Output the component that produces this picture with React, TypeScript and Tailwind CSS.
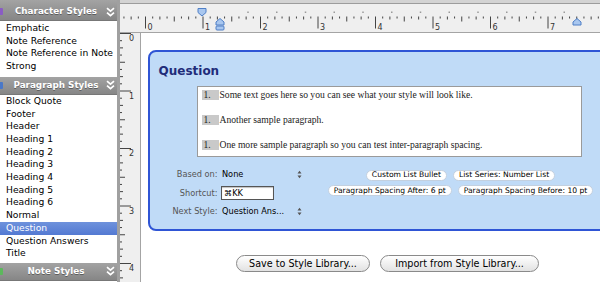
import React from "react";

const charStyles = ["Emphatic", "Note Reference", "Note Reference in Note", "Strong"];
const paraStyles = [
  "Block Quote",
  "Footer",
  "Header",
  "Heading 1",
  "Heading 2",
  "Heading 3",
  "Heading 4",
  "Heading 5",
  "Heading 6",
  "Normal",
  "Question",
  "Question Answers",
  "Title",
];

function Chevrons() {
  return (
    <svg width="9" height="10" viewBox="0 0 9 10">
      <path d="M1 1.2 L4.5 4.2 L8 1.2 M1 5.6 L4.5 8.6 L8 5.6" stroke="white" strokeWidth="1.7" fill="none" />
    </svg>
  );
}

function Header({ label, icon, tall }: { label: string; icon: string; tall?: boolean }) {
  return (
    <div
      className={
        "flex items-center bg-linear-to-b from-[#a3a3a3] to-[#868686] border-b border-[#777] " +
        (tall ? "h-[21px] pt-[3px]" : "h-[18px]")
      }
    >
      <div className={"w-[3px] h-[7px] rounded-r-[1px] " + icon} />
      <div className="flex-1 text-center pl-[6px] text-white font-bold text-[8.8px] leading-none [text-shadow:0_1px_0_rgba(0,0,0,0.35)]">
        {label}
      </div>
      <div className="w-[14px] flex items-center justify-center">
        <Chevrons />
      </div>
    </div>
  );
}

function UpDown() {
  return (
    <svg width="5" height="9" viewBox="0 0 5 9">
      <path d="M0.5 3.5 L2.5 0.8 L4.5 3.5 Z M0.5 5.5 L2.5 8.2 L4.5 5.5 Z" fill="#555" />
    </svg>
  );
}

function TopRuler() {
  const ticks: React.ReactNode[] = [];
  for (let i = -3; i <= 64; i++) {
    const x = 25.5 + 7.1875 * i;
    let len = 2;
    if (i % 8 === 0) len = 12;
    else if (i % 4 === 0) len = 5;
    else if (i % 2 === 0) len = 3;
    ticks.push(<line key={"t" + i} x1={x} x2={x} y1={16.5} y2={16.5 + len} stroke="#444" strokeWidth="1" />);
  }
  const nums: React.ReactNode[] = [];
  for (let n = 0; n <= 7; n++) {
    nums.push(
      <text key={"n" + n} x={25.5 + 57.5 * n + 2} y={30} fontSize="8" fill="#333" fontFamily="DejaVu Sans, sans-serif">
        {n}
      </text>
    );
  }
  const dots: React.ReactNode[] = [];
  for (let k = 0; k < 12; k++) {
    dots.push(<rect key={"d" + k} x={128 + 28.75 * k - 0.75} y={11.5} width="1.5" height="1.5" fill="#9a9a9a" />);
  }
  return (
    <svg width="480" height="33" className="block shrink-0">
      <rect x="0" y="0" width="480" height="4" fill="#d3d3d3" />
      <line x1="0" x2="480" y1="3.5" y2="3.5" stroke="#9c9c9c" />
      <rect x="0" y="4" width="480" height="28.5" fill="#efefef" />
      <line x1="0" x2="480" y1="32.5" y2="32.5" stroke="#a4a4a4" />
      {dots}
      {ticks}
      {nums}
      <path d="M78 8.5 L86 8.5 L86 12.5 L82 16 L78 12.5 Z" fill="#a9c7ef" stroke="#4f7fc6" strokeWidth="1" />
      <path d="M96 22 L100 18.5 L104 22 L104 25 L96 25 Z" fill="#a9c7ef" stroke="#4f7fc6" strokeWidth="1" />
      <rect x="96" y="26" width="8" height="4" rx="1" fill="#a9c7ef" stroke="#4f7fc6" strokeWidth="1" />
      <path d="M453 22 L457 18.5 L461 22 L461 25 L453 25 Z" fill="#a9c7ef" stroke="#4f7fc6" strokeWidth="1" />
    </svg>
  );
}

function VRuler() {
  const ticks: React.ReactNode[] = [];
  for (let i = 0; i <= 36; i++) {
    const y = 0.5 + 7.1875 * i;
    let len = 2;
    if (i % 8 === 0) len = 11;
    else if (i % 4 === 0) len = 5;
    else if (i % 2 === 0) len = 3;
    ticks.push(<line key={"v" + i} x1={0} x2={len} y1={y} y2={y} stroke="#444" strokeWidth="1" />);
  }
  const nums: React.ReactNode[] = [];
  for (let n = 0; n <= 4; n++) {
    nums.push(
      <text key={"vn" + n} x={9} y={57.5 * n + 8} fontSize="8" fill="#333" fontFamily="DejaVu Sans, sans-serif">
        {n}
      </text>
    );
  }
  return (
    <div className="w-[21px] shrink-0 bg-[#efefef] border-r border-[#a4a4a4]">
      <svg width="20" height="250" className="block">
        {ticks}
        {nums}
      </svg>
    </div>
  );
}

function Pill({ children }: { children: React.ReactNode }) {
  return (
    <div className="h-[11px] px-[5px] rounded-full bg-white border border-[#c3d0df] flex items-center text-[7.6px] leading-none text-black whitespace-nowrap">
      {children}
    </div>
  );
}

function PreviewRow({ text }: { text: string }) {
  return (
    <div className="h-[12px] flex items-center">
      <div className="ml-[4px] w-[17px] h-[10px] bg-[#c9c9c9] pl-[2px] flex items-center">1.</div>
      <div className="ml-[1px]">{text}</div>
    </div>
  );
}

export default function App() {
  return (
    <div className="w-[600px] h-[282px] overflow-hidden flex bg-white font-['DejaVu_Sans',sans-serif]">
      {/* Sidebar */}
      <div className="w-[117px] shrink-0 flex flex-col bg-white text-[9.2px] leading-[12.7px] text-black">
        <Header label="Character Styles" icon="bg-[#8a5cc4]" tall />
        <div className="pt-[1px] pb-[4px]">
          {charStyles.map((s) => (
            <div key={s} className="pl-[6px] whitespace-nowrap">
              {s}
            </div>
          ))}
        </div>
        <Header label="Paragraph Styles" icon="bg-[#4a78c8]" />
        <div className="pb-[3px]">
          {paraStyles.map((s) => (
            <div
              key={s}
              className={
                "pl-[6px] whitespace-nowrap " +
                (s === "Question" ? "bg-linear-to-b from-[#6e92dc] to-[#5379d2] text-white" : "")
              }
            >
              {s}
            </div>
          ))}
        </div>
        <Header label="Note Styles" icon="bg-[#5cb85c]" />
      </div>

      {/* Splitter */}
      <div className="w-[3px] shrink-0 bg-[#a0a0a0]" />

      {/* Document area */}
      <div className="flex-1 flex flex-col min-w-0">
        <TopRuler />
        <div className="flex flex-1 min-h-0">
          <VRuler />
          <div className="flex-1 min-w-0 overflow-hidden pl-[7px] pt-[17px]">
            <div className="w-[480px] rounded-[8px] border-[2.5px] border-[#2f55d5] bg-[#c0dbf7] pl-[8.5px] pt-[11px] pb-[8.5px]">
              <div className="text-[12px] font-bold leading-[16px] text-[#1f2c7a]">Question</div>
              <div className="ml-[38px] mt-[6.5px] w-[385px] border border-[#9a9a9a] bg-white pt-[2px] pb-[5px] flex flex-col gap-[13.3px] font-['Liberation_Serif',serif] text-[9.6px] leading-none text-[#222]">
                <PreviewRow text="Some text goes here so you can see what your style will look like." />
                <PreviewRow text="Another sample paragraph." />
                <PreviewRow text="One more sample paragraph so you can test inter-paragraph spacing." />
              </div>
              <div className="flex mt-[8.3px]">
                <div className="flex flex-col text-[8.2px] leading-none">
                  <div className="h-[18.3px] flex items-center">
                    <div className="w-[59px] text-right text-[#555]">Based on:</div>
                    <div className="ml-[4.5px] w-[75px] text-black">None</div>
                    <UpDown />
                  </div>
                  <div className="h-[18.3px] flex items-center">
                    <div className="w-[59px] text-right text-[#555]">Shortcut:</div>
                    <div className="ml-[3.5px] w-[53px] h-[14px] bg-white border border-[#555] shadow-[inset_0_1px_1px_rgba(0,0,0,0.25)] pl-[2px] flex items-center text-black">
                      ⌘KK
                    </div>
                  </div>
                  <div className="h-[18.3px] flex items-center">
                    <div className="w-[59px] text-right text-[#555]">Next Style:</div>
                    <div className="ml-[4.5px] w-[75px] text-black whitespace-nowrap">Question Ans...</div>
                    <UpDown />
                  </div>
                </div>
                <div className="w-[317px] pt-[4.3px] flex flex-col gap-[4.6px]">
                  <div className="flex justify-center gap-[6px]">
                    <Pill>Custom List Bullet</Pill>
                    <Pill>List Series: Number List</Pill>
                  </div>
                  <div className="flex justify-center gap-[6px]">
                    <Pill>Paragraph Spacing After: 6 pt</Pill>
                    <Pill>Paragraph Spacing Before: 10 pt</Pill>
                  </div>
                </div>
              </div>
            </div>
            <div className="flex gap-[10px] ml-[88px] mt-[24.5px]">
              <div className="w-[134px] h-[17px] rounded-full border border-[#8a8a8a] bg-linear-to-b from-white to-[#e2e2e2] flex items-center justify-center text-[9.6px] leading-none text-black">
                Save to Style Library...
              </div>
              <div className="w-[159px] h-[17px] rounded-full border border-[#8a8a8a] bg-linear-to-b from-white to-[#e2e2e2] flex items-center justify-center text-[9.6px] leading-none text-black">
                Import from Style Library...
              </div>
            </div>
          </div>
        </div>
      </div>
    </div>
  );
}
